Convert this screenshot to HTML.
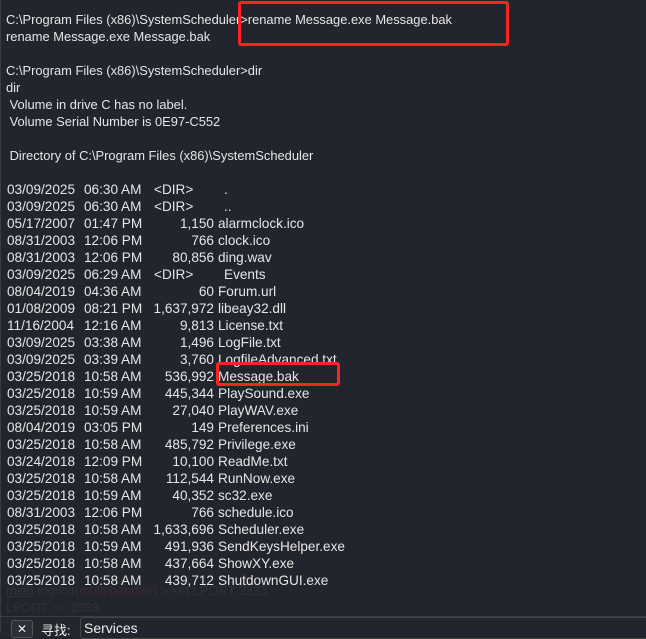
<!DOCTYPE html>
<html><head><meta charset="utf-8"><style>
html,body{margin:0;padding:0}
body{width:646px;height:633px;background:#23252e;position:relative;overflow:hidden;font-family:"Liberation Sans","DejaVu Sans",sans-serif;font-size:12.9px;color:#e6e6e6}
.l{position:absolute;left:6px;white-space:pre;line-height:17px}
.r{position:absolute;white-space:pre;line-height:17px;font-size:13.6px}
.g{position:absolute;white-space:pre;color:#2f3139;line-height:17px}
.box{position:absolute;border:3px solid #ff2222;border-radius:3px;box-sizing:border-box}
</style></head><body>
<div class="g" style="left:6px;top:599px">LPORT =&gt; 2333</div>
<div class="g" style="left:6px;top:582px"><u>msf6</u> exploit(<span style="color:#3a2a30">multi/handler</span>) &gt; set LPORT 2333</div>
<div class="l" style="top:11px">C:\Program Files (x86)\SystemScheduler&gt;rename Message.exe Message.bak</div>
<div class="l" style="top:28px">rename Message.exe Message.bak</div>
<div class="l" style="top:62px">C:\Program Files (x86)\SystemScheduler&gt;dir</div>
<div class="l" style="top:79px">dir</div>
<div class="l" style="top:96px"> Volume in drive C has no label.</div>
<div class="l" style="top:113px"> Volume Serial Number is 0E97-C552</div>
<div class="l" style="top:147px"> Directory of C:\Program Files (x86)\SystemScheduler</div>
<div id="rows"></div>
<script>
var d=[["03/09/2025","06:30 AM","<DIR>","."],["03/09/2025","06:30 AM","<DIR>",".."],["05/17/2007","01:47 PM","1,150","alarmclock.ico"],["08/31/2003","12:06 PM","766","clock.ico"],["08/31/2003","12:06 PM","80,856","ding.wav"],["03/09/2025","06:29 AM","<DIR>","Events"],["08/04/2019","04:36 AM","60","Forum.url"],["01/08/2009","08:21 PM","1,637,972","libeay32.dll"],["11/16/2004","12:16 AM","9,813","License.txt"],["03/09/2025","03:38 AM","1,496","LogFile.txt"],["03/09/2025","03:39 AM","3,760","LogfileAdvanced.txt"],["03/25/2018","10:58 AM","536,992","Message.bak"],["03/25/2018","10:59 AM","445,344","PlaySound.exe"],["03/25/2018","10:59 AM","27,040","PlayWAV.exe"],["08/04/2019","03:05 PM","149","Preferences.ini"],["03/25/2018","10:58 AM","485,792","Privilege.exe"],["03/24/2018","12:09 PM","10,100","ReadMe.txt"],["03/25/2018","10:58 AM","112,544","RunNow.exe"],["03/25/2018","10:59 AM","40,352","sc32.exe"],["08/31/2003","12:06 PM","766","schedule.ico"],["03/25/2018","10:58 AM","1,633,696","Scheduler.exe"],["03/25/2018","10:59 AM","491,936","SendKeysHelper.exe"],["03/25/2018","10:58 AM","437,664","ShowXY.exe"],["03/25/2018","10:58 AM","439,712","ShutdownGUI.exe"]];
var h="";
d.forEach(function(r,i){var t=181+i*17;
h+='<div class="r" style="left:7px;top:'+t+'px">'+r[0]+'</div><div class="r" style="left:84px;top:'+t+'px">'+r[1]+'</div>';
if(r[2]=="<DIR>"){h+='<div class="r" style="left:154px;top:'+t+'px">&lt;DIR&gt;</div><div class="r" style="left:224px;top:'+t+'px">'+r[3]+'</div>';}
else{h+='<div class="r" style="right:432px;top:'+t+'px">'+r[2]+'</div><div class="r" style="left:218px;top:'+t+'px">'+r[3]+'</div>';}
});
document.getElementById("rows").innerHTML=h;
</script>
<div class="box" style="left:238px;top:1px;width:271px;height:45px"></div>
<div class="box" style="left:216px;top:362px;width:124px;height:24px"></div>
<div style="position:absolute;left:0;top:616px;width:646px;height:17px;background:#24262e;border-top:1px solid #3a3c44"></div>
<div style="position:absolute;left:11px;top:620px;width:20px;height:16px;border:1px solid #555;border-radius:3px;background:#2e3038;color:#eee;font-size:12px;font-weight:bold;text-align:center;line-height:16px">✕</div>
<div style="position:absolute;left:41px;top:620px;font-family:'Liberation Sans','Noto Sans CJK SC',sans-serif;font-size:13px;color:#eee">寻找:</div>
<div style="position:absolute;left:80px;top:617px;width:570px;height:20px;border:1px solid #444;border-radius:3px;background:#23252e"></div>
<div style="position:absolute;left:84px;top:620px;font-size:14px;color:#eee">Services</div>
<div style="position:absolute;left:0;top:0;width:1px;height:633px;background:#3a3c44"></div>
</body></html>
